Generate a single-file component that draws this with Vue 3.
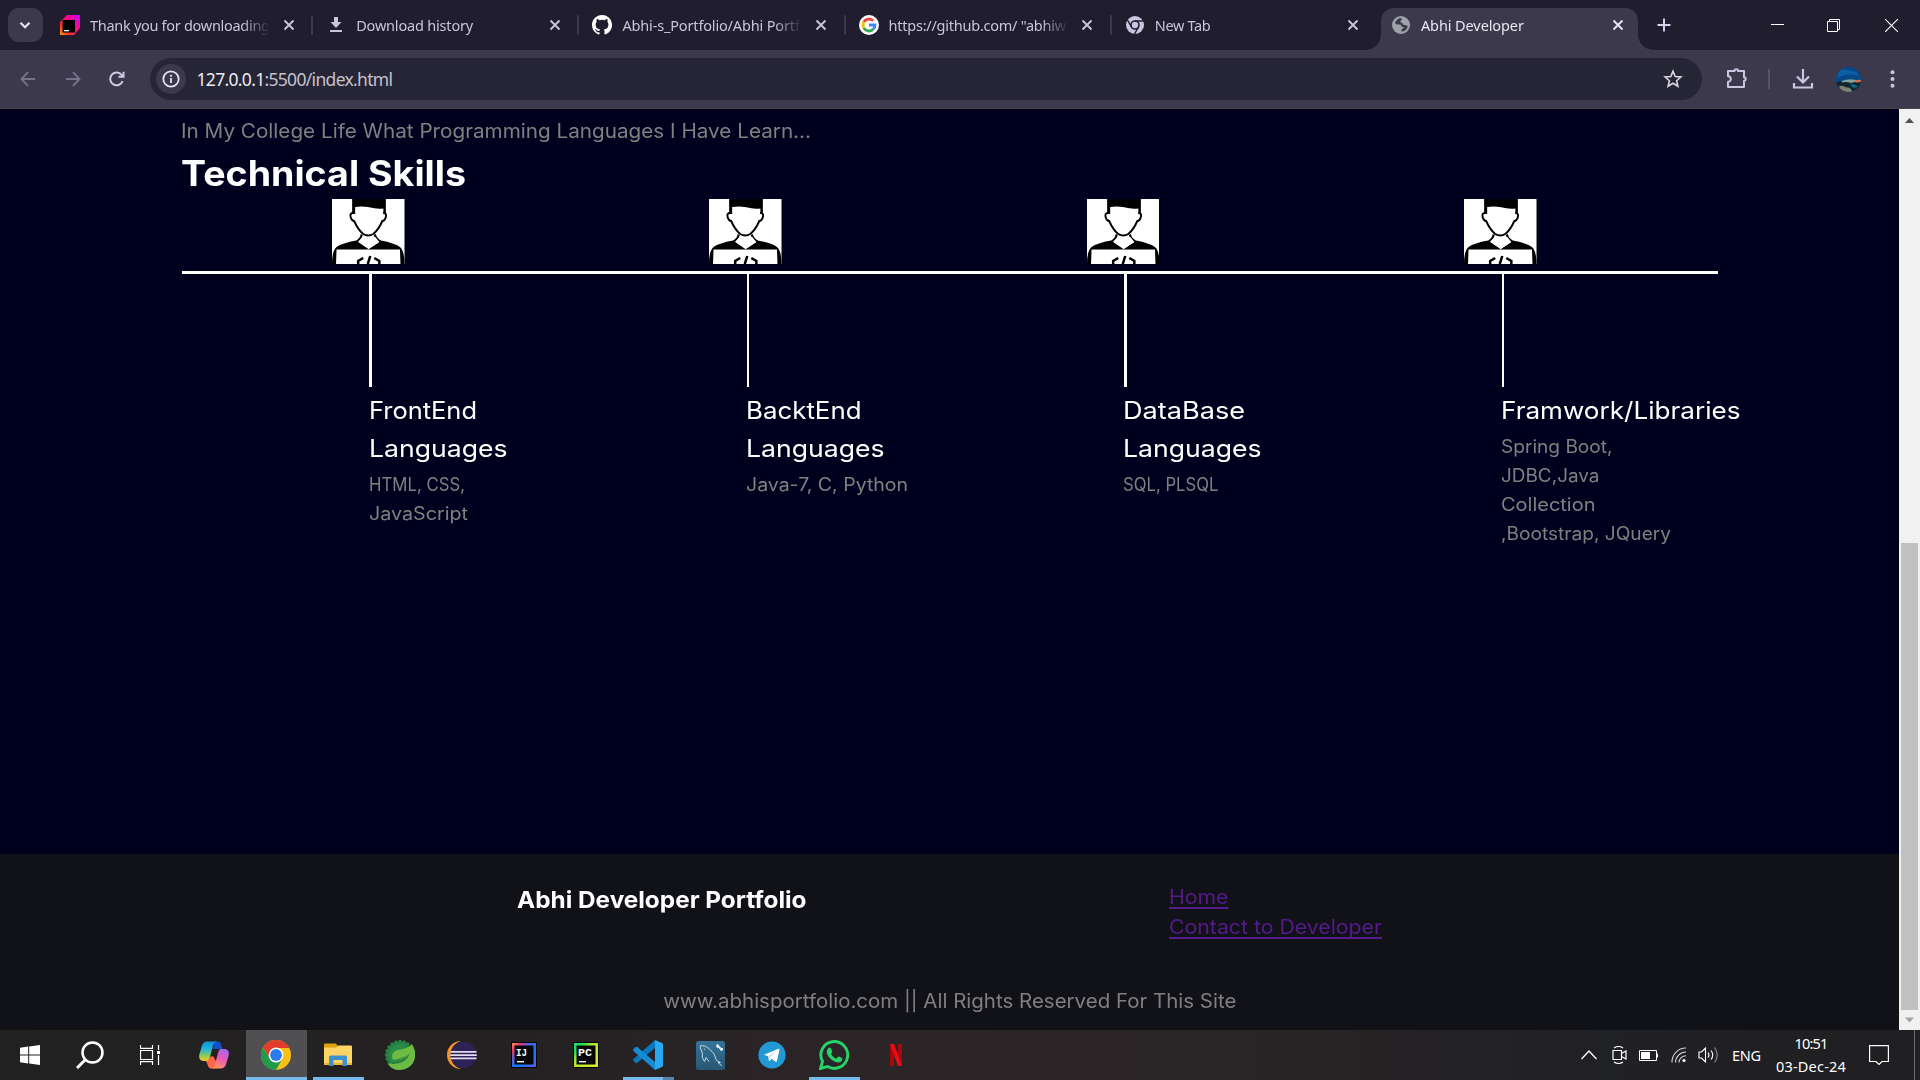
<script setup>
const tabs = [
  { title: 'Thank you for downloading', width: 180, icon: 'jetbrains' },
  { title: 'Download history', width: 117, icon: 'download' },
  { title: 'Abhi-s_Portfolio/Abhi Portf', width: 177.5, icon: 'github' },
  { title: 'https://github.com/ "abhiw', width: 177.5, icon: 'google' },
  { title: 'New Tab', width: 56, icon: 'chrome' },
  { title: 'Abhi Developer', width: 103, icon: 'globe', active: true },
]

const skills = [
  { heading: [['FrontEnd', 108], ['Languages', 138.5]], items: [['HTML, CSS,', 96], ['JavaScript', 99]] },
  { heading: [['BacktEnd', 115.5], ['Languages', 138.5]], items: [['Java-7, C, Python', 162]] },
  { heading: [['DataBase', 122], ['Languages', 138.5]], items: [['SQL, PLSQL', 95.5]] },
  {
    heading: [['Framwork/Libraries', 239.5]],
    items: [['Spring Boot,', 111.5], ['JDBC,Java', 98.5], ['Collection', 94.5], [',Bootstrap, JQuery', 170]],
  },
]

const apps = [
  { name: 'copilot' },
  { name: 'chrome', active: true },
  { name: 'explorer', open: true },
  { name: 'spring' },
  { name: 'eclipse' },
  { name: 'intellij' },
  { name: 'pycharm' },
  { name: 'vscode', open: true, multi: true },
  { name: 'mysql' },
  { name: 'telegram' },
  { name: 'whatsapp', open: true },
  { name: 'netflix' },
]

const gear = Array.from({ length: 20 }, (_, i) => i * 18)

// Tracks a line of text so that it spans the given width
const vFit = {
  mounted(el, { value }) {
    const natural = el.getBoundingClientRect().width
    const count = el.textContent.trim().length
    el.style.letterSpacing = `${((value - natural) / (count - 1)).toFixed(3)}px`
  },
}

// Widens the letterforms themselves so that the line spans the given width
const vStretch = {
  mounted(el, { value }) {
    el.style.transform = `scaleX(${(value / el.getBoundingClientRect().width).toFixed(4)})`
  },
}
</script>

<template>
  <div class="screen">
    <header class="tabstrip">
      <button class="tab-search">
        <svg width="14" height="14" viewBox="0 0 14 14"><path d="M2.500 4.800 7 9.300l4.500-4.500" fill="none" stroke="#e6e1f2" stroke-width="2.200" /></svg>
      </button>
      <div class="tabs">
        <div v-for="(t, i) in tabs" :key="i" class="tab" :class="{ active: t.active, last: i === 4 }">
          <span class="favicon">
            <svg v-if="t.icon === 'jetbrains'" width="20" height="20" viewBox="0 0 20 20">
              <defs><linearGradient id="jb" x1="1" y1="0" x2="0" y2="1"><stop offset="0" stop-color="#c800ff" /><stop offset=".45" stop-color="#ff0a7a" /><stop offset=".75" stop-color="#ff3a30" /><stop offset="1" stop-color="#ff9a00" /></linearGradient></defs>
              <path d="M7 0h13v13l-6 7H0V7z" fill="url(#jb)" /><path d="M2.500 5h12.500v12.500H2.500z" fill="#000" /><path d="M4 15h5v1.300H4z" fill="#fff" />
            </svg>
            <svg v-else-if="t.icon === 'download'" width="20" height="20" viewBox="0 0 20 20"><path d="M8 2h4v5h3.500L10 13 4.500 7H8zM4 15h12v2H4z" fill="#cbc6df" /></svg>
            <svg v-else-if="t.icon === 'github'" width="20" height="20" viewBox="0 0 16 16"><path fill="#fff" d="M8 0C3.580 0 0 3.580 0 8c0 3.540 2.290 6.530 5.470 7.590.4.070.55-.17.55-.38 0-.19-.010-.82-.010-1.490-2.010.37-2.530-.49-2.690-.94-.09-.23-.48-.94-.82-1.130-.28-.15-.68-.52-.010-.53.63-.010 1.080.58 1.230.82.72 1.210 1.870.87 2.330.66.070-.52.28-.87.51-1.070-1.780-.2-3.640-.89-3.640-3.950 0-.87.31-1.590.82-2.150-.08-.2-.36-1.020.08-2.120 0 0 .67-.21 2.200.82a7.600 7.600 0 0 1 4 0c1.530-1.040 2.200-.82 2.200-.82.44 1.100.16 1.920.08 2.120.51.56.82 1.270.82 2.150 0 3.070-1.870 3.750-3.650 3.950.29.25.54.73.54 1.480 0 1.070-.010 1.930-.010 2.200 0 .21.15.46.55.38A8 8 0 0 0 8 0" /></svg>
            <svg v-else-if="t.icon === 'google'" width="20" height="20" viewBox="0 0 20 20" fill="none" stroke-width="2.800">
              <circle cx="10" cy="10" r="10" fill="#fff" />
              <path d="M14.200 5.800A6 6 0 0 0 4.800 7" stroke="#ea4335" /><path d="M4.800 7a6 6 0 0 0 0 6" stroke="#fbbc05" /><path d="M4.800 13a6 6 0 0 0 9 1.600" stroke="#34a853" /><path d="M10 10h6a6 6 0 0 1-2.200 4.600" stroke="#4285f4" />
            </svg>
            <svg v-else-if="t.icon === 'chrome'" width="20" height="20" viewBox="0 0 20 20">
              <circle cx="10" cy="10" r="9" fill="#cbc6df" /><circle cx="10" cy="10" r="4" fill="none" stroke="#201e2e" stroke-width="1.600" />
              <path d="M10 6h8.500M13.500 12 9.500 19M6.500 12 2.500 5" stroke="#201e2e" stroke-width="1.500" />
            </svg>
            <svg v-else width="20" height="20" viewBox="0 0 20 20">
              <circle cx="10" cy="10" r="9" fill="#9da3a8" />
              <path d="M10.500 3c-3 0-5.500 2-6.500 5 1.500 2 3.500 1.500 5 1.500 1.500.2 1 2.500 3 2.500 1.500 0 1 2-1.500 2v2.500c3 0 5.500-2 6.300-5-.8-1.500-2.300-1.500-3.800-1.500-1.500-.3-1-2-3-2.500-1.500-.5-.5-2 .5-2z" fill="#3c394d" />
              <path d="M11 4.500h4l1 3-3 1.500-2-2z" fill="#9da3a8" />
            </svg>
          </span>
          <span class="tab-title"><span v-fit="t.width" class="line">{{ t.title }}</span></span>
          <svg class="tab-close" width="12" height="12" viewBox="0 0 12 12"><path d="m1.500 1.500 9 9m0-9-9 9" fill="none" stroke="currentColor" stroke-width="1.900" /></svg>
        </div>
      </div>
      <svg class="new-tab" width="14" height="14" viewBox="0 0 14 14"><path d="M7 .5v13M.5 7h13" stroke="#d6d0ea" stroke-width="2" /></svg>
      <div class="window-controls">
        <svg width="13" height="13" viewBox="0 0 13 13"><path d="M0 5.500h13" stroke="#fff" /></svg>
        <svg width="13" height="13" viewBox="0 0 13 13" fill="none" stroke="#fff"><path d="M.5 2.500h10v10H.5zM2.500 2.500v-2h10v10h-2" /></svg>
        <svg width="13" height="13" viewBox="0 0 13 13"><path d="m0 0 13 13M13 0 0 13" stroke="#fff" stroke-width="1.100" /></svg>
      </div>
    </header>

    <div class="toolbar">
      <div class="nav">
        <svg width="16" height="16" viewBox="0 0 16 16" fill="none" stroke="#77738a" stroke-width="1.900"><path d="M15 8H2M8 1.200 1.500 8 8 14.800" /></svg>
        <svg width="16" height="16" viewBox="0 0 16 16" fill="none" stroke="#77738a" stroke-width="1.900"><path d="M1 8h13M8 1.200 14.500 8 8 14.800" /></svg>
        <svg width="16" height="16" viewBox="0 0 16 16"><path d="M13.600 10.200A6.400 6.400 0 1 1 12.700 4l1.500 1.500" fill="none" stroke="#d0cae3" stroke-width="2" /><path d="M15.500.8v6h-6v-2h4v-4z" fill="#d0cae3" /></svg>
      </div>
      <div class="omnibox">
        <span class="site-info">
          <svg width="18" height="18" viewBox="0 0 18 18"><circle cx="9" cy="9" r="7.700" fill="none" stroke="#e6e1f0" stroke-width="1.800" /><path d="M8.100 8h1.800v5H8.100zM8.100 4.800h1.800v1.900H8.100z" fill="#e6e1f0" /></svg>
        </span>
        <span v-fit="196.5" class="url line"><b>127.0.0.1</b>:5500/index.html</span>
        <svg class="star" width="20" height="20" viewBox="0 0 20 20"><path d="m10 2.200 2.200 5.300 5.700.5-4.300 3.700 1.300 5.600L10 14.300l-4.900 3 1.300-5.600L2.100 8l5.700-.5z" fill="none" stroke="#d9d7dd" stroke-width="1.600" /></svg>
      </div>
      <svg class="puzzle" width="22" height="22" viewBox="0 0 22 22"><path d="M2 4h6.500a1.800 1.800 0 0 1 3.600 0H18v6.300a1.700 1.700 0 0 1 0 3.400V20H2v-5.200a2.800 2.800 0 0 0 0-5.600z" fill="none" stroke="#cbc6df" stroke-width="2" stroke-linejoin="round" /></svg>
      <i class="divider"></i>
      <svg class="dl" width="22" height="22" viewBox="0 0 22 22" fill="none" stroke="#cbc6df" stroke-width="2.200"><path d="M11 1v13M5 8.500l6 6 6-6M2 15v4.500h18V15" /></svg>
      <svg class="avatar" width="25" height="25" viewBox="0 0 25 25">
        <defs><clipPath id="av"><circle cx="12.500" cy="12.500" r="12.500" /></clipPath></defs>
        <g clip-path="url(#av)"><path d="M0 0h25v25H0z" fill="#07488a" /><path d="M3 4q5-3 9-1t9 2l1 4q-8-3-13-1T1 10z" fill="#0a5fa6" /><path d="M0 15q4-1 7 0l5-3 13 2v11H4L0 19z" fill="#132533" /><path d="M6 14q6-3 14-1l3 2q-5-.5-8 1-5-1.500-9-.5z" fill="#7fa39b" /><path d="M18 13.500q5-1 7-.5v2l-5 .5z" fill="#d96f4c" /><path d="M3 19q4-1 6 1l5 1 3 4H5z" fill="#7c8074" /><path d="m14 17 6 1 2 2-5 1z" fill="#0d6a86" /></g>
      </svg>
      <svg class="dots" width="5" height="18" viewBox="0 0 5 18" fill="#cbc6df"><circle cx="2.500" cy="2.200" r="2" /><circle cx="2.500" cy="9" r="2" /><circle cx="2.500" cy="15.800" r="2" /></svg>
    </div>

    <div class="viewport">
      <main class="page">
        <section class="skills">
          <p class="intro"><span v-stretch="630" class="line">In My College Life What Programming Languages I Have Learn...</span></p>
          <h1><span v-stretch="285" class="line">Technical Skills</span></h1>
          <div class="portraits">
            <svg v-for="n in 4" :key="n" width="72.5" height="65" viewBox="0 0 72 65" preserveAspectRatio="none">
              <path d="M0 0h72v65H0z" fill="#fff" />
              <path d="M20 0h33.500v15H51V9.500q-7 .8-14-1.200-7-1.500-14-.3V15h-3z" />
              <path d="M21 14q-3.500 0-2.500 4 1 4 3.500 4 4 9 9 13 5 3 10 0 5-4 9-13 2.500 0 3.500-4 1-4-2.500-4" fill="none" stroke="#000" stroke-width="1.900" />
              <path d="M28.500 35Q28 39 24 41.500 10 44 4.500 48 0 52 0 65h4L4.500 50.500h63L68 65h4q0-13-4.500-17-5.500-4-19-6.500-4-2.500-5-6.500l-2 1q1 4 5.500 7l-10.500 7-10.500-7.500q4-3 4.500-6.500z" />
              <path d="m26 43 10.300 7L47 43l-4-5-6.700 2-6-2z" fill="#fff" />
              <path d="m31 59-5 3v3m16-6 5 3v3M38 57l-2.500 8" fill="none" stroke="#000" stroke-width="2.500" />
            </svg>
          </div>
          <div class="rail"></div>
          <div class="columns">
            <article v-for="(s, i) in skills" :key="i">
              <div class="stem"></div>
              <h2><span v-for="h in s.heading" :key="h[0]" class="row"><span v-stretch="h[1]" class="line">{{ h[0] }}</span></span></h2>
              <p><span v-for="x in s.items" :key="x[0]" class="row"><span v-stretch="x[1]" class="line">{{ x[0] }}</span></span></p>
            </article>
          </div>
        </section>
        <footer>
          <div class="footer-top">
            <h3><span v-stretch="289.5" class="line">Abhi Developer Portfolio</span></h3>
            <nav>
              <a><span v-stretch="59.5" class="line">Home</span></a>
              <a><span v-stretch="213" class="line">Contact to Developer</span></a>
            </nav>
          </div>
          <p class="copyright"><span v-stretch="573" class="line">www.abhisportfolio.com || All Rights Reserved For This Site</span></p>
        </footer>
      </main>
      <aside class="scrollbar">
        <svg width="21" height="21" viewBox="0 0 21 21"><path d="M6 14h9l-4.500-5z" fill="#505050" /></svg>
        <div class="track"><div class="thumb"></div></div>
        <svg width="21" height="20" viewBox="0 0 21 20"><path d="M6 7.500h9l-4.500 5z" fill="#a3a3a3" /></svg>
      </aside>
    </div>

    <div class="taskbar">
      <div class="system">
        <svg width="20" height="20" viewBox="0 0 20 20" fill="#fff"><path d="m0 2.700 8.200-1.100v7.900H0zM9.200 1.400 20 0v9.500H9.200zM0 10.500h8.200v7.900L0 17.300zM9.200 10.500H20V20L9.200 18.600z" /></svg>
        <svg width="28" height="28" viewBox="0 0 28 28" fill="none" stroke="#fff"><circle cx="16.500" cy="11.500" r="10" stroke-width="2.500" /><path d="m9 19-8 8" stroke-width="3" /></svg>
        <svg width="20" height="20" viewBox="0 0 20 20" fill="none" stroke="#fff" stroke-width="1.200"><path d="M.5 5.500h12v9H.5zM.5 0v3.400h12V0M.5 20v-3.400h12V20M18.500 0v5M18.500 10v10" /><path d="M17 6h3v3h-3z" fill="#fff" stroke="none" /></svg>
      </div>
      <div v-for="a in apps" :key="a.name" class="app" :class="{ active: a.active, open: a.open, multi: a.multi }">
        <svg v-if="a.name === 'copilot'" width="30" height="28" viewBox="0 0 30 28">
          <defs>
            <linearGradient id="cp1" x1="0" y1="0" x2="0" y2="1"><stop offset="0" stop-color="#138fdf" /><stop offset=".4" stop-color="#22b5dd" /><stop offset=".7" stop-color="#83ca62" /><stop offset="1" stop-color="#f5cb23" /></linearGradient>
            <linearGradient id="cp2" x1=".7" y1="0" x2=".3" y2="1"><stop offset="0" stop-color="#a864ef" /><stop offset=".5" stop-color="#ed5bb3" /><stop offset="1" stop-color="#ff9558" /></linearGradient>
          </defs>
          <path d="M15 .5h4q2.500 0 3.500 4l1 3.500H14z" fill="#1550c9" />
          <path d="M8 20H4q-5-1-3.500-7L3 4.500Q4.500.5 8.500.5h9q-2.500.5-3.500 4L11 16q-1 4-3 4z" fill="url(#cp1)" />
          <path d="M7 20q3 0 4-4l3-1 4 7-2 5.500h-4q-2.500 0-3.500-4z" fill="#ff674a" />
          <path d="M22 8h4q5 1 3.500 7L27 23.500q-1.500 4-5.500 4h-9q2.500-.5 3.500-4L19 12q1-4 3-4z" fill="url(#cp2)" />
        </svg>
        <svg v-else-if="a.name === 'chrome'" width="30" height="30" viewBox="0 0 30 30">
          <circle cx="15" cy="15" r="15" fill="#fbc116" />
          <path d="M15 15V8h13.300A15 15 0 0 0 2 7.500L9 18.500z" fill="#e33b2e" />
          <path d="M2 7.500A15 15 0 0 0 15 30l6.500-11.500L15 15l-6 3.500z" fill="#219a4b" />
          <circle cx="15" cy="15" r="7.400" fill="#fff" /><circle cx="15" cy="15" r="5.900" fill="#2b7bee" />
        </svg>
        <svg v-else-if="a.name === 'explorer'" width="28" height="24" viewBox="0 0 28 24">
          <path d="M0 1.200Q0 .5 1 .5h11l2 3v4H0z" fill="#dfa00c" /><path d="M0 4.500h12l2-2h13q1 0 1 1V22H0z" fill="#ffd467" /><path d="M0 20h28v2H0z" fill="#edb331" />
          <path d="M5 23V14q0-1.500 1.500-1.500h15q1.500 0 1.500 1.500v9h-4.500v-6h-9v6z" fill="#3c91d2" />
        </svg>
        <svg v-else-if="a.name === 'spring'" width="30" height="30" viewBox="0 0 30 30">
          <circle cx="15" cy="15" r="13" fill="#298b45" /><path v-for="g in gear" :key="g" d="M13.600 0h2.800l.8 4h-4.400z" fill="#258343" :transform="`rotate(${g} 15 15)`" />
          <path d="M27 4q6 10 1 19-5 7-14 7-7 0-11-6 12-2 20-10-4 4-15 6-3-7 4-10 11-1 15-6z" fill="#6dbb45" /><path d="M6 22q11 0 19-9-4 11-16 11-3 0-3-2z" fill="#287e3d" />
        </svg>
        <svg v-else-if="a.name === 'eclipse'" width="30" height="28" viewBox="0 0 30 28">
          <path d="M14 0A14 14 0 0 0 14 28Q4 25 4 14T14 0" fill="#f49322" /><circle cx="16.500" cy="14" r="13.200" fill="#2c2255" /><path d="M3.500 10h26v1.800h-26zM3.200 13.200h26.600V15H3.200zM3.500 16.400h26v1.800h-26z" fill="#e1dcef" />
        </svg>
        <svg v-else-if="a.name === 'intellij' || a.name === 'pycharm'" width="26" height="26" viewBox="0 0 26 26">
          <defs>
            <linearGradient id="ij" x1="0" y1="0" x2="1" y2="1"><stop offset="0" stop-color="#ff9056" /><stop offset=".18" stop-color="#ed3769" /><stop offset=".36" stop-color="#5760e2" /><stop offset=".6" stop-color="#087cfa" /><stop offset="1" stop-color="#675de5" /></linearGradient>
            <linearGradient id="pc" x1="0" y1="0" x2="1" y2="1"><stop offset="0" stop-color="#21d789" /><stop offset=".2" stop-color="#20e344" /><stop offset=".4" stop-color="#b0e72e" /><stop offset="1" stop-color="#e2eb2c" /></linearGradient>
          </defs>
          <path d="M0 0h26v26H0z" fill="#060608" /><path d="M1 1h24v24H1z" :fill="a.name === 'intellij' ? 'url(#ij)' : 'url(#pc)'" />
          <path d="M3.500 3.500h19v19h-19z" fill="#07080a" /><path d="M6 19h7v1.400H6z" fill="#fff" />
          <text x="5" y="13.500" class="badge-text" :textLength="a.name === 'intellij' ? 11 : 14" lengthAdjust="spacingAndGlyphs">{{ a.name === 'intellij' ? 'IJ' : 'PC' }}</text>
        </svg>
        <svg v-else-if="a.name === 'vscode'" width="30" height="30" viewBox="0 0 30 30">
          <path d="M22 0v8L4.500 22.800q-1 .8-2 0L.5 21q-1-1 0-2z" fill="#0878bf" /><path d="M22 30v-8L4.500 7.200q-1-.8-2 0L.5 9q-1 1 0 2z" fill="#168bd3" /><path d="m22 0 7 3q1 .6 1 1.500v21q0 1-1 1.500l-7 3z" fill="#28a8ee" />
        </svg>
        <svg v-else-if="a.name === 'mysql'" width="29" height="29" viewBox="0 0 29 29">
          <defs><linearGradient id="my" x1="0" y1="0" x2="0" y2="1"><stop offset="0" stop-color="#347399" /><stop offset="1" stop-color="#285873" /></linearGradient></defs>
          <rect width="29" height="29" rx="2.500" fill="url(#my)" /><path d="M8.500 20.500Q5 16 6.500 12.500 3 4.500 5 4.500q5 0 8.500 3.500 5.500 4 7 11.500l4 2-2.500 0 4 3.500M8.500 20.500l1.500-4 3 4M8 8l1 .5" fill="none" stroke="#d3e1ea" stroke-width=".9" /><path d="m22 5 4 4" stroke="#e3edf4" stroke-width="2" /><path d="m20 4 2-1 1 3-2 1zM24 8l3-1v2l-2 1z" fill="#fff" />
        </svg>
        <svg v-else-if="a.name === 'telegram'" width="28" height="28" viewBox="0 0 28 28">
          <circle cx="14" cy="14" r="13.600" fill="#2299d4" /><path d="m6 13.800 14.500-6q1.200-.3.900 1.200l-2.400 11q-.3 1.200-1.600.4l-3.600-2.700-2 2q-.9.600-1-.8l-.8-3.700z" fill="#fff" /><path d="m10.400 15 8-5-6.500 6-.7 3.500z" fill="#b9d9e9" />
        </svg>
        <svg v-else-if="a.name === 'whatsapp'" width="30" height="30" viewBox="0 0 30 30">
          <path d="m1.500 28.500 2-7.200A13.400 13.400 0 1 1 8.500 26.500z" fill="none" stroke="#25d366" stroke-width="2.900" />
          <path d="M9.500 8q1-.8 2.200 0l1.600 3.600q.2.900-1.300 2.400 2 3.400 5.200 4.700l1.600-1.800q.5-.6 1.200-.3l3 1.500q.6.500.2 2-1 2.500-4 2.500-4.200-.3-8.200-4.300Q7.400 14.500 7.800 11q.3-2 1.700-3z" fill="#25d366" />
        </svg>
        <svg v-else width="12" height="22" viewBox="0 0 12 22"><path d="M0 0h4v22H0zM8 0h4v22H8z" fill="#a9070e" /><path d="M0 0h4l8 22H8z" fill="#e90b16" /></svg>
      </div>

      <div class="tray">
        <svg class="t-up" width="16" height="10" viewBox="0 0 16 10"><path d="m.5 9 7.500-8 7.500 8" fill="none" stroke="#fff" stroke-width="1.300" /></svg>
        <svg class="t-cam" width="15" height="18" viewBox="0 0 15 18" fill="none" stroke="#fff" stroke-width="1.200"><path d="M1 4.500h8.500v9H1zM9.500 7.500 14 5v8l-4.500-2.500M2 2q4.500-3 9 0M2 16q4.500 3 9 0" /></svg>
        <svg class="t-bat" width="19" height="11" viewBox="0 0 19 11"><path d="M.5.5h17v10H.5z" fill="none" stroke="#fff" /><path d="M2 2h9v7H2zM18 3.500h1v4h-1z" fill="#fff" /></svg>
        <svg class="t-wifi" width="16" height="16" viewBox="0 0 16 16" fill="none" stroke="#fff" stroke-width="1.100"><path d="M1 15.500A14 14 0 0 1 15 1M4.500 15.500A10.500 10.500 0 0 1 15 5M8 15.500A7 7 0 0 1 15 8.700" opacity=".8" /><circle cx="13" cy="13.500" r="1.600" fill="#fff" stroke="none" /></svg>
        <svg class="t-vol" width="21" height="18" viewBox="0 0 21 18" fill="none" stroke="#fff" stroke-width="1.100"><path d="M1 6h2.500L7.500 2v14l-4-4H1zM10 6.500q2 2.500 0 5M13 4.500q3.500 4.500 0 9" /><path d="M16.500 1.500q5.500 7.500 0 15" opacity=".5" /></svg>
        <span class="lang"><span v-fit="29" class="line">ENG</span></span>
        <div class="clock"><span v-fit="34" class="line">10:51</span><span v-fit="70" class="line">03-Dec-24</span></div>
        <svg class="t-note" width="20" height="20" viewBox="0 0 20 20"><path d="M.6.6h18.800v15.900H13l-3 3-3-3H.6z" fill="none" stroke="#fff" stroke-width="1.200" /></svg>
        <i class="peek"></i>
      </div>
    </div>
  </div>
</template>

<style>
body { margin: 0; overflow: hidden; background: #00001e; }
</style>

<style scoped>
* { box-sizing: border-box; }
svg { display: block; flex: none; }
h1, h2, h3, p { margin: 0; }
.screen { width: 1920px; height: 1080px; display: flex; flex-direction: column; overflow: hidden; font-family: "Noto Sans", "Open Sans", sans-serif; }
.line { display: inline-block; white-space: nowrap; transform-origin: 0 50%; }
.row { display: block; }

.tabstrip { height: 50px; flex: none; display: flex; align-items: center; background: #201e2e; }
.tab-search { width: 35px; height: 34px; margin-left: 7.500px; padding: 0; border: 0; border-radius: 11px; background: #3c394d; display: flex; align-items: center; justify-content: center; }
.tabs { display: flex; margin-left: 5.500px; height: 50px; }
.tab { position: relative; width: 266.2px; height: 50px; display: flex; align-items: center; padding-left: 12px; color: #c9c4dc; font-size: 14.5px; line-height: 20px; }
.tab::after { content: ""; position: absolute; right: 1px; top: 15px; width: 2px; height: 20px; border-radius: 1px; background: #3c394d; }
.tab.last::after { display: none; }
.favicon { width: 20px; flex: none; }
.tab-title { width: 178px; flex: none; margin-left: 10px; overflow: hidden; -webkit-mask-image: linear-gradient(90deg, #000 152px, transparent 180px); mask-image: linear-gradient(90deg, #000 152px, transparent 180px); }
.tab-close { margin-left: 14.500px; }
.tab.active { width: 257px; height: 42px; margin-top: 8px; margin-left: 2px; padding: 0 0 8px 10px; border-radius: 13px 13px 0 0; background: #3c394d; color: #e8e4f0; }
.tab.active .tab-close { margin-left: 13.500px; }
.tab.active::before, .tab.active::after { content: ""; position: absolute; top: auto; bottom: 0; width: 15px; height: 15px; border-radius: 0; }
.tab.active::before { left: -15px; background: radial-gradient(circle at 0 0, transparent 14.5px, #3c394d 15px); }
.tab.active::after { right: -15px; background: radial-gradient(circle at 100% 0, transparent 14.5px, #3c394d 15px); }
.new-tab { margin-left: 19px; }
.window-controls { margin-left: auto; margin-right: 22px; display: flex; gap: 45px; }
.window-controls svg:first-child { margin-right: -2px; }

.toolbar { height: 59px; flex: none; display: flex; align-items: center; background: #3c394d; border-bottom: 1px solid #47474b; }
.nav { display: flex; gap: 28.500px; margin-left: 20px; width: 130px; }
.omnibox { width: 1552px; height: 42px; border-radius: 21px; background: #262536; display: flex; align-items: center; padding-left: 6px; }
.site-info { width: 30px; height: 30px; border-radius: 50%; background: #3c394d; display: flex; align-items: center; justify-content: center; }
.url { margin-left: 10.500px; font-size: 17.5px; line-height: 24px; color: #c5c2cc; }
.url b { font-weight: 400; color: #eceaf1; }
.star { margin-left: auto; margin-right: 19.500px; }
.puzzle { margin-left: 24px; margin-top: -2px; }
.divider { width: 2px; height: 20px; margin-left: 20px; background: #57546a; }
.dl { margin-left: 21.500px; }
.avatar { margin-left: 22px; }
.dots { margin-left: 29.500px; }

.viewport { height: 921px; flex: none; display: flex; }
.page { width: 1899px; display: flex; flex-direction: column; background: #00001e; font-family: Inter, "Open Sans", sans-serif; }
.skills { height: 745px; padding: 7px 0 0 182px; }
.intro { font-size: 19.5px; line-height: 30px; color: #808080; }
.intro .line, h1 .line { margin-left: -1px; }
h1 { height: 53px; padding-top: 1px; font-size: 35px; line-height: 53px; font-weight: 700; color: #fff; }
.portraits { display: flex; gap: 304.9px; margin-left: 150px; height: 72px; }
.rail { width: 1536px; height: 3px; background: #fff; }
.columns { display: grid; grid-template-columns: repeat(4, 377.4px); padding-left: 187.4px; }
.stem { width: 2.5px; height: 113px; background: #fff; }
.columns .line { margin-left: -0.8px; }
h2 { margin-top: 5px; font-size: 24px; line-height: 38px; font-weight: 400; color: #fff; }
.columns p { margin-top: 2px; font-size: 18px; line-height: 29px; color: #808080; }
footer { height: 176px; background: #111118; padding-top: 27px; }
.footer-top { display: flex; height: 105px; padding-left: 516.5px; }
h3 { width: 652px; padding-top: 1px; font-size: 23.5px; line-height: 36px; font-weight: 700; color: #fff; }
nav { padding-top: 1px; font-size: 19.5px; line-height: 30px; }
nav a { display: block; color: #551a8b; text-decoration: none; }
nav .line { text-decoration: underline; text-decoration-thickness: 2px; text-underline-offset: 3px; text-decoration-skip-ink: none; }
.copyright { text-align: center; font-size: 19.5px; line-height: 30px; color: #808080; }
.copyright .line { transform-origin: 50% 50%; }

.scrollbar { width: 21px; background: #f1f1f1; display: flex; flex-direction: column; }
.track { flex: 1; display: flex; flex-direction: column; justify-content: flex-end; align-items: center; }
.thumb { width: 17px; height: 467px; background: #c1c1c1; }

.taskbar { height: 50px; flex: none; display: flex; background: linear-gradient(90deg, #222122 0, #242122 25%, #2c2528 45%, #292426 65%, #202124 84%, #201f22 100%); color: #fff; }
.system { display: flex; width: 183px; }
.system svg { align-self: center; }
.system svg:nth-child(1) { margin-left: 20px; }
.system svg:nth-child(2) { margin-left: 36px; }
.system svg:nth-child(3) { margin-left: 36px; margin-top: -1px; }
.app { position: relative; width: 62px; height: 50px; display: flex; align-items: center; justify-content: center; }
.app.active { width: 61px; margin-left: 1px; padding-right: 1px; background: #505052; }
.app.open::after, .app.active::after { content: ""; position: absolute; left: 6px; bottom: 0; width: 51px; height: 3px; background: #76b9ed; }
.app.active::after { left: 0; width: 61px; }
.app.multi::after { background: linear-gradient(90deg, #76b9ed 40px, #5685ad 40px); }
.badge-text { font: 700 11px "Liberation Mono", monospace; fill: #fff; }
.tray { margin-left: auto; display: flex; align-items: center; height: 50px; font-size: 14.5px; line-height: 20px; }
.t-cam { margin-left: 15.500px; }
.t-bat { margin-left: 12px; }
.t-wifi { margin-left: 13px; }
.t-vol { margin-left: 11px; }
.lang { width: 29px; margin-left: 13px; }
.clock { width: 70px; margin-left: 15px; display: flex; flex-direction: column; align-items: center; line-height: 23px; }
.t-note { margin-left: 23px; }
.peek { width: 1px; height: 50px; margin-left: 25px; margin-right: 5px; background: #6a6a6c; }
</style>
